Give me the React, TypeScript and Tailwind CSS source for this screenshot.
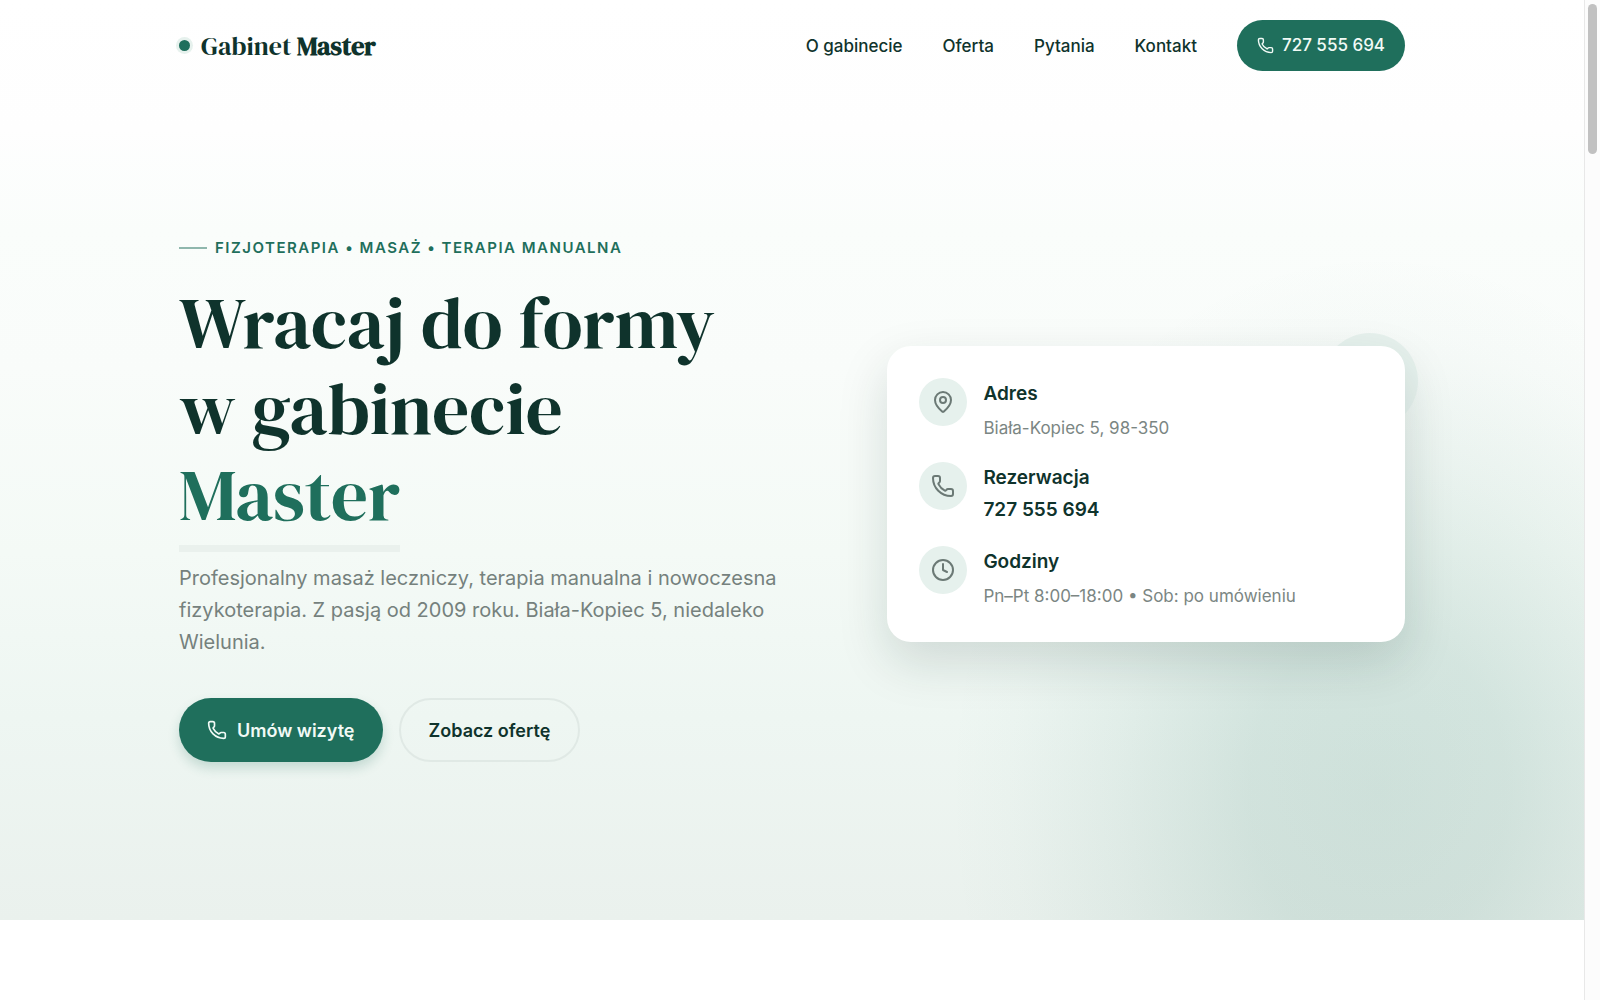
import React from "react";
import { Clock, MapPin, Phone } from "lucide-react";

const navLinks = [
  { label: "O gabinecie", href: "#o-gabinecie" },
  { label: "Oferta", href: "#oferta" },
  { label: "Pytania", href: "#pytania" },
  { label: "Kontakt", href: "#kontakt" },
];

function Header() {
  return (
    <header className="mx-auto flex w-full max-w-[1290px] items-center justify-between px-8 py-5">
      <a href="#start" className="flex items-center gap-[11px]">
        <span className="size-[11px] rounded-full bg-[#1f6f5c] ring-[3px] ring-[#e6f1ed]" />
        <span className="font-['DM_Serif_Display','Liberation_Serif',serif] text-[26px] leading-8">
          Gabinet <strong className="font-bold">Master</strong>
        </span>
      </a>
      <nav className="flex items-center gap-10 text-[17px] leading-[27px] font-medium">
        {navLinks.map((link) => (
          <a key={link.href} href={link.href} className="pt-0.5">
            {link.label}
          </a>
        ))}
        <a
          href="tel:727555694"
          className="flex items-center gap-2 rounded-full bg-[#1f6f5c] px-5 py-3 text-[#f1faf6]"
        >
          <Phone size={17} strokeWidth={2} />
          727 555 694
        </a>
      </nav>
    </header>
  );
}

function InfoRow({
  icon,
  title,
  children,
}: {
  icon: React.ReactNode;
  title: string;
  children: React.ReactNode;
}) {
  return (
    <li className="flex gap-4">
      <span className="flex size-12 shrink-0 items-center justify-center rounded-full bg-[#e6f1ed] text-[#6b7975]">
        {icon}
      </span>
      <div>
        <h2 className="text-[19px] leading-8 font-semibold">{title}</h2>
        {children}
      </div>
    </li>
  );
}

function ContactCard() {
  return (
    <div className="relative mb-2">
      <div className="absolute -top-[13px] -right-[13px] size-24 rounded-full bg-[#e6f1ed]" />
      <ul className="relative flex flex-col gap-5 rounded-3xl bg-white p-8 shadow-[0_20px_50px_rgba(16,50,42,0.15)]">
        <InfoRow icon={<MapPin size={24} strokeWidth={2} />} title="Adres">
          <p className="mt-1 text-[17px] leading-7 text-[#7b8683]">Biała-Kopiec 5, 98-350</p>
        </InfoRow>
        <InfoRow icon={<Phone size={24} strokeWidth={2} />} title="Rezerwacja">
          <a href="tel:727555694" className="block text-[19px] leading-8 font-semibold">
            727 555 694
          </a>
        </InfoRow>
        <InfoRow icon={<Clock size={24} strokeWidth={2} />} title="Godziny">
          <p className="mt-1 text-[17px] leading-7 text-[#7b8683]">Pn–Pt 8:00–18:00 • Sob: po umówieniu</p>
        </InfoRow>
      </ul>
    </div>
  );
}

function Hero() {
  return (
    <section className="mx-auto grid w-full max-w-[1290px] grid-cols-[1.245fr_1fr] items-center gap-16 px-8 pt-[143px] pb-[158px]">
      <div>
        <p className="flex items-center gap-2 text-[15px] leading-7 font-semibold tracking-[0.1em] text-[#1f6f5c]">
          <span className="h-0.5 w-7 bg-[#8fb7ad]" />
          FIZJOTERAPIA • MASAŻ • TERAPIA MANUALNA
        </p>
        <h1 className="mt-[17px] font-['DM_Serif_Display','Liberation_Serif',serif] text-[73px] leading-[86px] font-normal">
          Wracaj do formy
          <br />w gabinecie
          <br />
          <span className="inline-block border-b-[7px] border-[#eaf1ed] pb-2 text-[#1f6f5c]">Master</span>
        </h1>
        <p className="mt-[10px] max-w-[600px] text-[20px] leading-8 text-[#75817d]">
          Profesjonalny masaż leczniczy, terapia manualna i nowoczesna fizykoterapia. Z pasją od 2009 roku.
          Biała-Kopiec 5, niedaleko Wielunia.
        </p>
        <div className="mt-10 flex gap-4 text-[18px] font-semibold">
          <a
            href="tel:727555694"
            className="flex h-16 items-center gap-[10px] rounded-full bg-[#1f6f5c] px-7 text-[#f1faf6] shadow-[0_6px_12px_rgba(31,111,92,0.2)]"
          >
            <Phone size={20} strokeWidth={2} />
            Umów wizytę
          </a>
          <a href="#oferta" className="flex h-16 items-center rounded-full border-2 border-[#e0e9e5] px-7">
            Zobacz ofertę
          </a>
        </div>
      </div>
      <ContactCard />
    </section>
  );
}

export default function App() {
  return (
    <div className="flex min-h-screen bg-white font-['Inter',sans-serif] text-[#0f332c]">
      <main className="min-w-0 flex-1">
        <div className="bg-[radial-gradient(ellipse_430px_540px_at_87%_86%,rgba(31,111,92,0.15),rgba(31,111,92,0.135)_30%,rgba(31,111,92,0.06)_62%,rgba(31,111,92,0.015)_85%,transparent),linear-gradient(to_bottom,#ffffff,#fefefe_14%,#fafdfb_25%,#f9fcfa_40%,#f4faf6_60%,#eef6f2_78%,#eaf1ed)]">
          <Header />
          <Hero />
        </div>
      </main>
      <div className="w-4 shrink-0 border-l border-[#e8e8e8] bg-[#fcfcfc] px-[3px] pt-1" aria-hidden="true">
        <div className="h-[150px] w-[9px] rounded-full bg-[#c1c1c1]" />
      </div>
    </div>
  );
}
